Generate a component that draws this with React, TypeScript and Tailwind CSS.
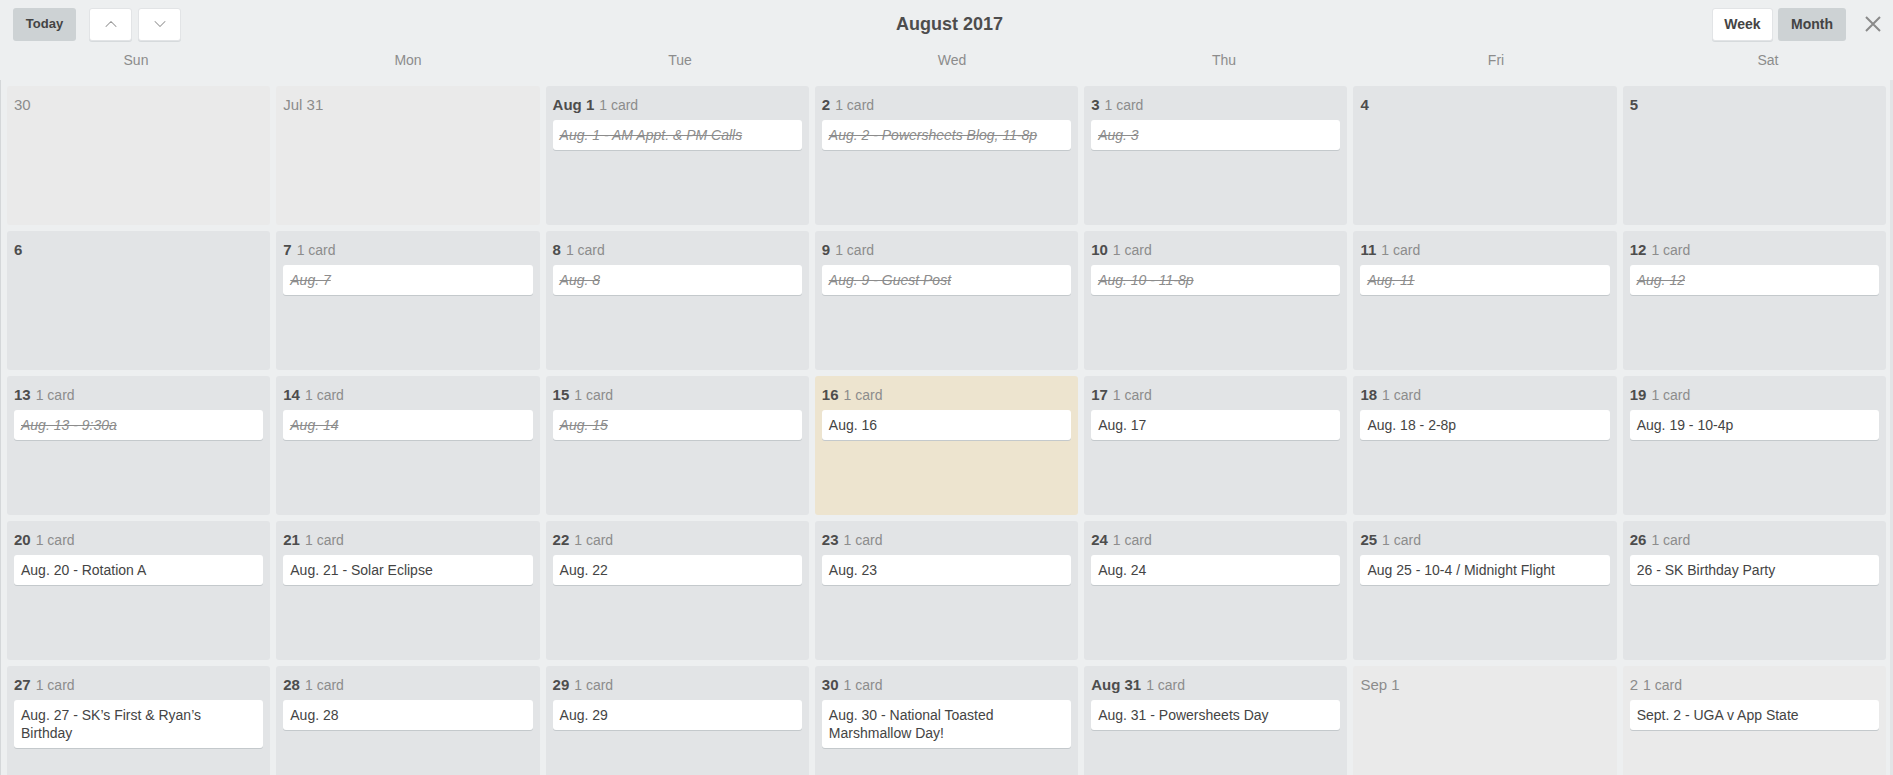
import { ChevronDown, ChevronUp } from 'lucide-react'

type Day = {
  label: string
  muted?: boolean
  today?: boolean
  card?: string
  done?: boolean
}

const weekdays = ['Sun', 'Mon', 'Tue', 'Wed', 'Thu', 'Fri', 'Sat']

const weeks: Day[][] = [
  [
    { label: '30', muted: true },
    { label: 'Jul 31', muted: true },
    { label: 'Aug 1', card: 'Aug. 1 - AM Appt. & PM Calls', done: true },
    { label: '2', card: 'Aug. 2 - Powersheets Blog, 11-8p', done: true },
    { label: '3', card: 'Aug. 3', done: true },
    { label: '4' },
    { label: '5' },
  ],
  [
    { label: '6' },
    { label: '7', card: 'Aug. 7', done: true },
    { label: '8', card: 'Aug. 8', done: true },
    { label: '9', card: 'Aug. 9 - Guest Post', done: true },
    { label: '10', card: 'Aug. 10 - 11-8p', done: true },
    { label: '11', card: 'Aug. 11', done: true },
    { label: '12', card: 'Aug. 12', done: true },
  ],
  [
    { label: '13', card: 'Aug. 13 - 9:30a', done: true },
    { label: '14', card: 'Aug. 14', done: true },
    { label: '15', card: 'Aug. 15', done: true },
    { label: '16', card: 'Aug. 16', today: true },
    { label: '17', card: 'Aug. 17' },
    { label: '18', card: 'Aug. 18 - 2-8p' },
    { label: '19', card: 'Aug. 19 - 10-4p' },
  ],
  [
    { label: '20', card: 'Aug. 20 - Rotation A' },
    { label: '21', card: 'Aug. 21 - Solar Eclipse' },
    { label: '22', card: 'Aug. 22' },
    { label: '23', card: 'Aug. 23' },
    { label: '24', card: 'Aug. 24' },
    { label: '25', card: 'Aug 25 - 10-4 / Midnight Flight' },
    { label: '26', card: '26 - SK Birthday Party' },
  ],
  [
    { label: '27', card: 'Aug. 27 - SK’s First & Ryan’s Birthday' },
    { label: '28', card: 'Aug. 28' },
    { label: '29', card: 'Aug. 29' },
    { label: '30', card: 'Aug. 30 - National Toasted Marshmallow Day!' },
    { label: 'Aug 31', card: 'Aug. 31 - Powersheets Day' },
    { label: 'Sep 1', muted: true },
    { label: '2', muted: true, card: 'Sept. 2 - UGA v App State' },
  ],
]

function DayCell({ day }: { day: Day }) {
  const bg = day.today
    ? 'bg-[#ede4cf]'
    : day.muted
      ? 'bg-[#eaeaea]'
      : 'bg-[#e2e4e6]'

  return (
    <div className={`h-[139px] rounded-[3px] px-[7px] pt-[9px] ${bg}`}>
      <div className="flex h-5 items-baseline leading-5">
        <span
          className={
            day.muted
              ? 'text-[15px] text-[#8c8c8c]'
              : 'text-[15px] font-bold text-[#4d4d4d]'
          }
        >
          {day.label}
        </span>
        {day.card && (
          <span className="ml-[5px] text-[14px] text-[#8c8c8c]">1 card</span>
        )}
      </div>

      {day.card && (
        <div className="mt-[5px] rounded-[3px] bg-white py-[6px] pl-[7px] pr-[16px] text-[14px] leading-[18px] shadow-[0_1px_0_#c4c9cc]">
          <span
            className={
              day.done
                ? 'italic text-[#8c8c8c] line-through'
                : 'text-[#444444]'
            }
          >
            {day.card}
          </span>
        </div>
      )}
    </div>
  )
}

export default function App() {
  return (
    <div className="h-screen overflow-hidden bg-[#edeff0] font-['Liberation_Sans',Arial,sans-serif] text-[#4d4d4d]">
      <div className="grid h-12 grid-cols-[1fr_auto_1fr] items-center px-[13px]">
        <div className="flex items-center gap-[6px]">
          <button
            type="button"
            className="mr-[7px] h-[33px] w-[63px] rounded-[3px] bg-[#cdd2d4] text-[13px] font-bold text-[#444]"
          >
            Today
          </button>
          <button
            type="button"
            className="flex h-[33px] w-[43px] items-center justify-center rounded-[3px] border border-[#e2e4e6] bg-white shadow-[0_1px_0_#d6dadc]"
          >
            <ChevronUp className="size-5 text-[#999]" strokeWidth={1.25} />
          </button>
          <button
            type="button"
            className="flex h-[33px] w-[43px] items-center justify-center rounded-[3px] border border-[#e2e4e6] bg-white shadow-[0_1px_0_#d6dadc]"
          >
            <ChevronDown className="size-5 text-[#999]" strokeWidth={1.25} />
          </button>
        </div>

        <h1 className="pl-[6px] text-[18px] font-bold text-[#4d4d4d]">
          August 2017
        </h1>

        <div className="flex items-center justify-end">
          <button
            type="button"
            className="h-[33px] w-[61px] rounded-[3px] border border-[#e2e4e6] bg-white text-[14px] font-bold text-[#444] shadow-[0_1px_0_#d6dadc]"
          >
            Week
          </button>
          <button
            type="button"
            className="ml-[5px] h-[33px] w-[68px] rounded-[3px] bg-[#cdd2d4] text-[14px] font-bold text-[#444]"
          >
            Month
          </button>
          <button
            type="button"
            className="ml-[19px] mr-[-1px] flex size-4 items-center justify-center"
          >
            <svg width="16" height="16" viewBox="0 0 16 16">
              <path
                d="M1 1 15 15M15 1 1 15"
                stroke="#8a8a8a"
                strokeWidth="2"
                fill="none"
              />
            </svg>
          </button>
        </div>
      </div>

      <div className="grid h-6 grid-cols-[repeat(7,272px)] items-center">
        {weekdays.map((name) => (
          <div key={name} className="text-center text-[14px] text-[#8c8c8c]">
            {name}
          </div>
        ))}
      </div>

      <div className="mt-2 h-[calc(100vh-80px)] border-l border-r-[3px] border-l-[#d4d7d9] border-r-[#e2e4e6] pl-[6px] pr-[4px] pt-[6px]">
        <div className="grid grid-cols-7 gap-[6px]">
          {weeks.map((week) =>
            week.map((day, i) => <DayCell key={`${day.label}-${i}`} day={day} />),
          )}
        </div>
      </div>
    </div>
  )
}
